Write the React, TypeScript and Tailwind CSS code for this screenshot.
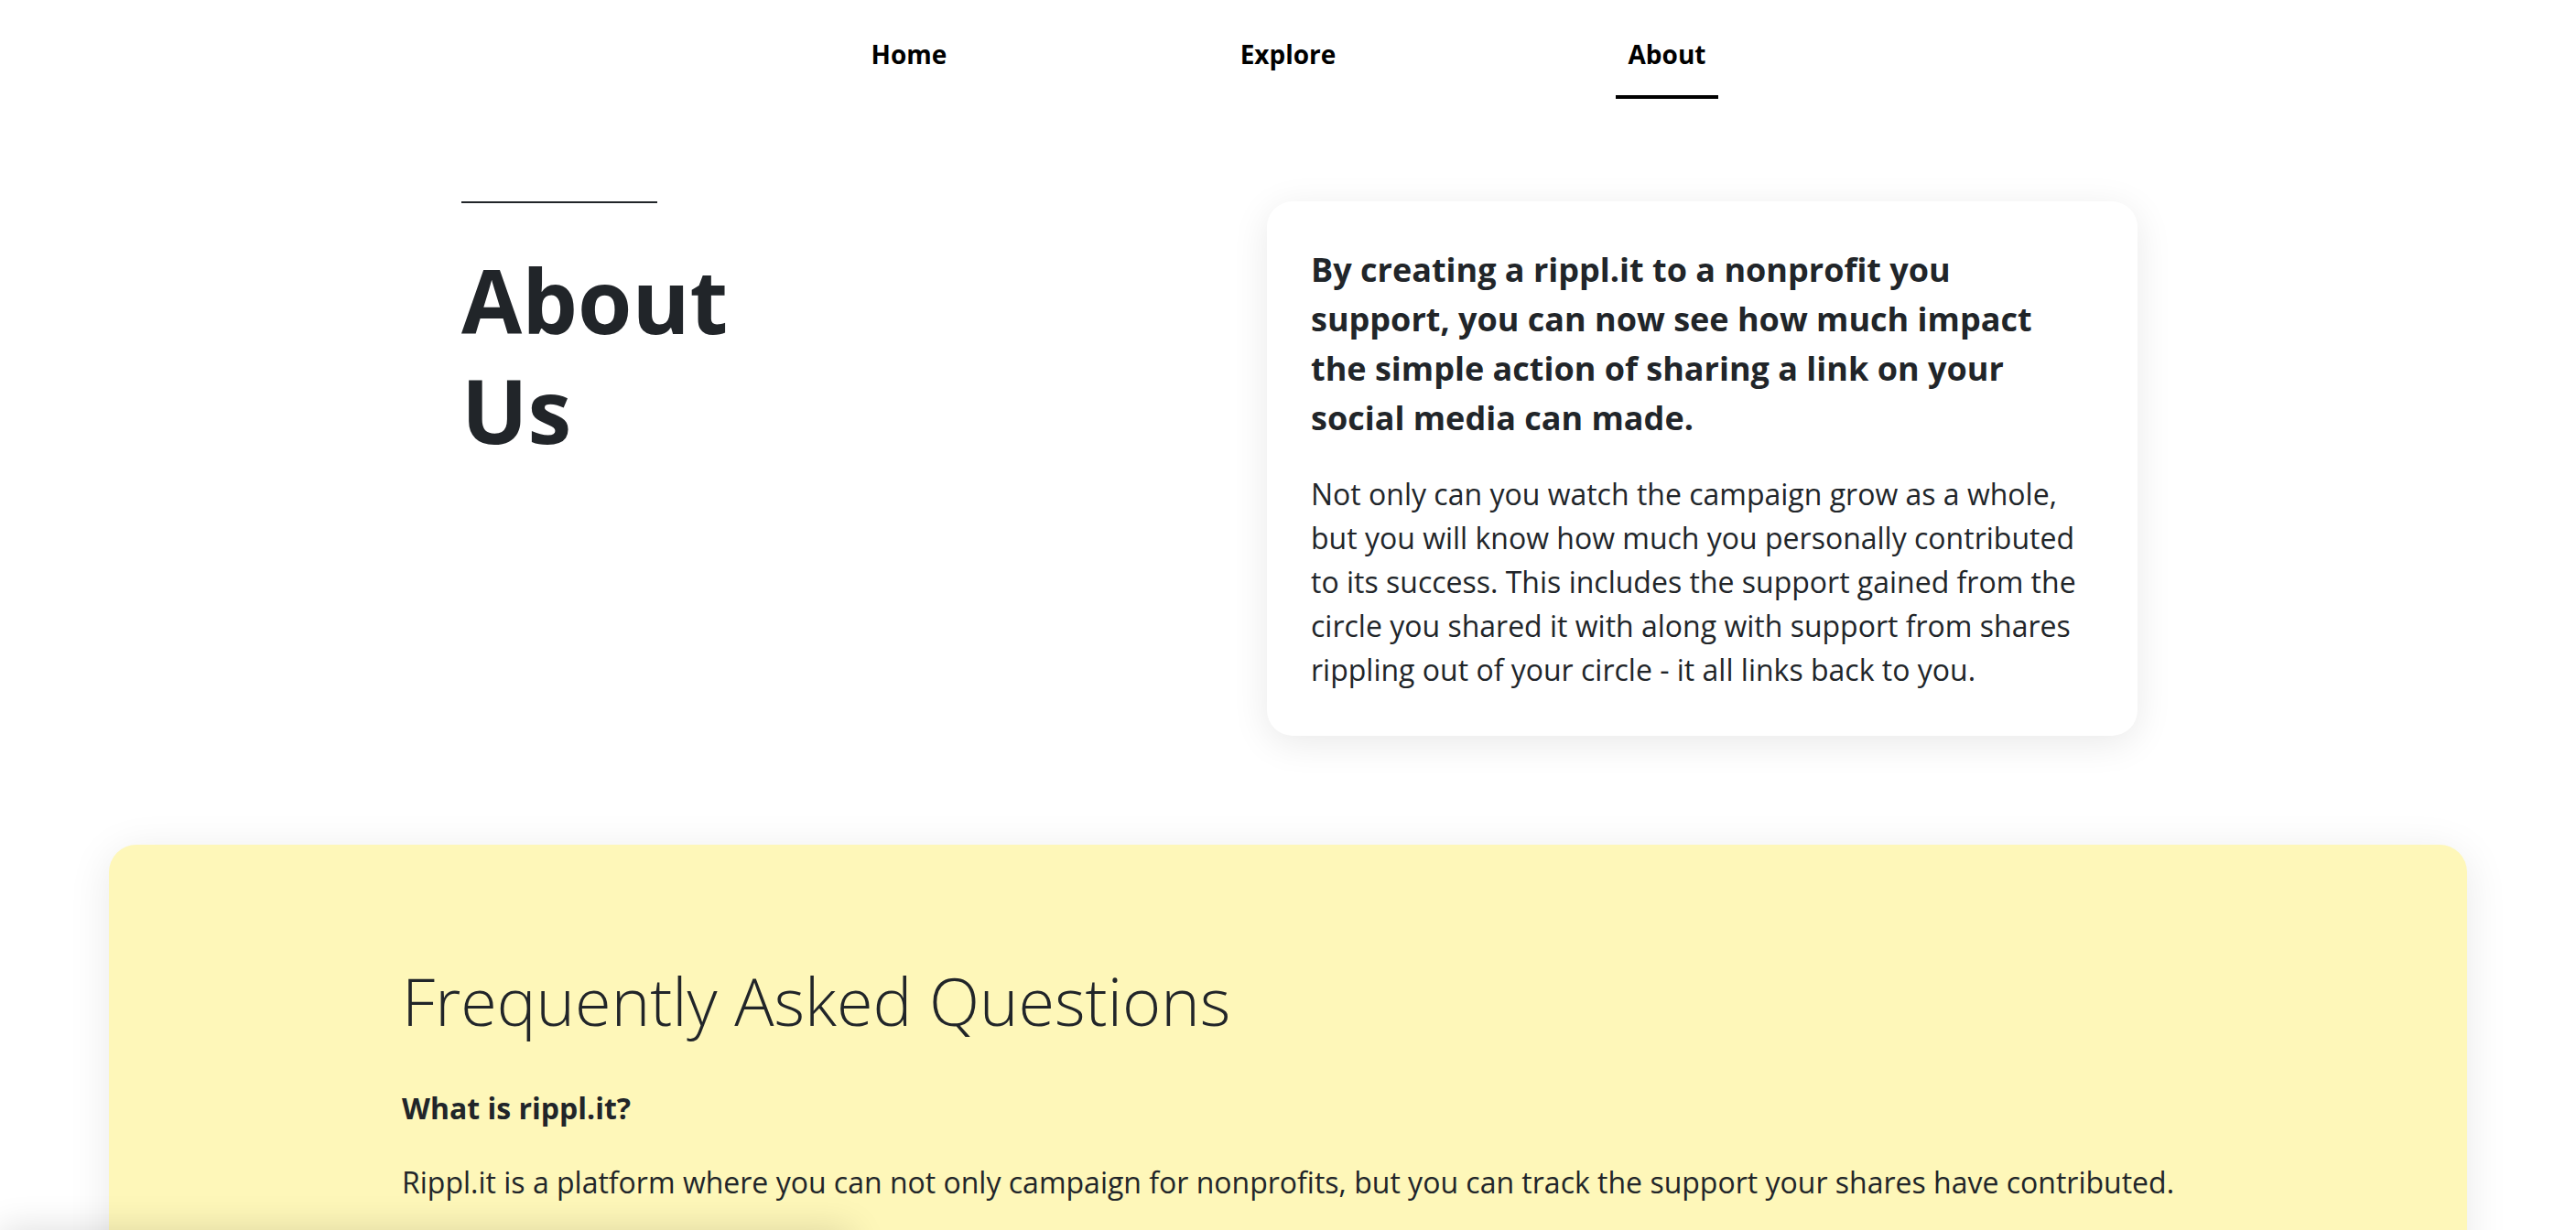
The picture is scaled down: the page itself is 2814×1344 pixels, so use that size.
import React from 'react';

const navItems = [
  { label: 'Home', active: false },
  { label: 'Explore', active: false },
  { label: 'About', active: true },
];

const App: React.FC = () => {
  return (
    <div className="relative min-h-screen overflow-hidden bg-white font-['Open_Sans',sans-serif] text-[#212529]">
      {/* top nav */}
      <nav className="flex justify-center pt-[40px]">
        {navItems.map(item => (
          <div key={item.label} className="flex w-[414px] justify-center">
            <a
              className={`border-b-4 px-[14px] pb-[26px] text-[28px] font-bold leading-[38px] text-black ${
                item.active ? 'border-black' : 'border-transparent'
              }`}
            >
              {item.label}
            </a>
          </div>
        ))}
      </nav>

      {/* hero */}
      <section className="mt-[112px] flex pl-[504px]">
        <div className="flex-1">
          <div className="h-[2px] w-[214px] bg-[#212529]" />
          <h1 className="mt-[46px] w-[400px] text-[96px] font-bold leading-[1.25]">About Us</h1>
        </div>
        <div className="mr-[479px] w-[951px] rounded-[28px] bg-white p-12 shadow-[0_8px_40px_rgba(0,0,0,0.09)]">
          <p className="text-[36px] font-bold leading-[54px]">
            By creating a rippl.it to a nonprofit you support, you can now see how much impact the simple
            action of sharing a link on your social media can made.
          </p>
          <p className="mt-[32px] text-[32px] leading-[48px]">
            Not only can you watch the campaign grow as a whole, but you will know how much you personally
            contributed to its success. This includes the support gained from the circle you shared it with
            along with support from shares rippling out of your circle - it all links back to you.
          </p>
        </div>
      </section>

      {/* faq */}
      <section className="mx-[119px] mt-[119px] rounded-[30px] bg-[#fef7b9] pb-[200px] pl-[320px] pt-[127px] shadow-[0_8px_48px_rgba(0,0,0,0.09)]">
        <h2 className="text-[72px] font-light leading-[86px]">Frequently Asked Questions</h2>
        <h3 className="mt-[51px] text-[32px] font-bold leading-[48px]">What is rippl.it?</h3>
        <p className="mt-[33px] text-[32px] leading-[48px]">
          Rippl.it is a platform where you can not only campaign for nonprofits, but you can track the support
          your shares have contributed.
        </p>
      </section>

      {/* panel peeking from below the fold */}
      <div className="fixed bottom-[-40px] left-0 h-[40px] w-[930px] bg-white shadow-[0_0_40px_rgba(0,0,0,0.14)]" />
    </div>
  );
};

export default App;
